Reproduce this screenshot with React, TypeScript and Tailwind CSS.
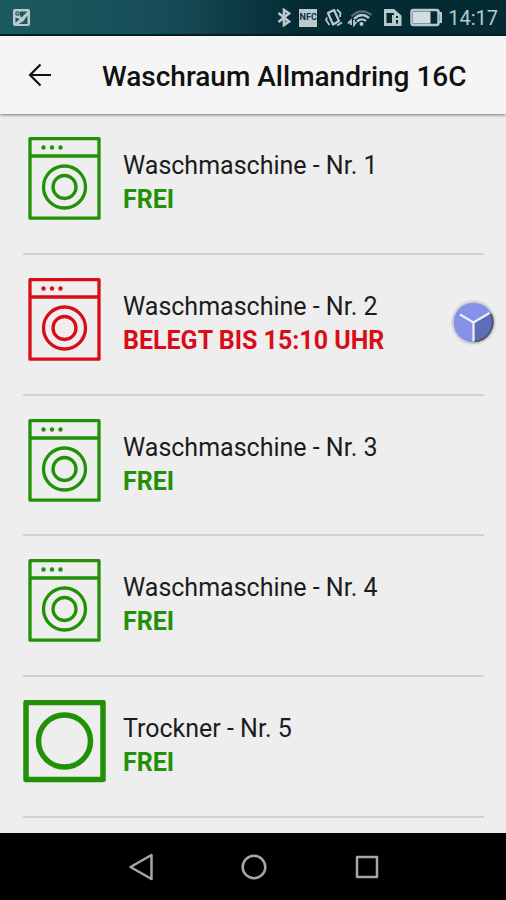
type Machine = {
  id: number;
  kind: "washer" | "dryer";
  name: string;
  status: string;
  free: boolean;
};

const machines: Machine[] = [
  { id: 1, kind: "washer", name: "Waschmaschine - Nr. 1", status: "FREI", free: true },
  { id: 2, kind: "washer", name: "Waschmaschine - Nr. 2", status: "BELEGT BIS 15:10 UHR", free: false },
  { id: 3, kind: "washer", name: "Waschmaschine - Nr. 3", status: "FREI", free: true },
  { id: 4, kind: "washer", name: "Waschmaschine - Nr. 4", status: "FREI", free: true },
  { id: 5, kind: "dryer", name: "Trockner - Nr. 5", status: "FREI", free: true },
];

function WasherIcon() {
  return (
    <svg className="size-[83px] shrink-0" viewBox="0 0 83 83" fill="none" stroke="currentColor" strokeWidth="3.300" strokeLinejoin="round" aria-hidden="true">
      <rect x="7" y="1.700" width="69" height="79.500" />
      <path d="M7 19H76" />
      <circle cx="41.500" cy="50" r="21" />
      <circle cx="41.500" cy="50" r="11.500" />
      <g fill="currentColor" stroke="none">
        <circle cx="20.500" cy="10.500" r="2.200" />
        <circle cx="29" cy="10.500" r="2.200" />
        <circle cx="37.500" cy="10.500" r="2.200" />
      </g>
    </svg>
  );
}

function DryerIcon() {
  return (
    <svg className="size-[83px] shrink-0" viewBox="0 0 83 83" fill="none" stroke="currentColor" strokeWidth="5.500" strokeLinejoin="round" aria-hidden="true">
      <rect x="3" y="2.500" width="77" height="77" />
      <circle cx="41.500" cy="41" r="26" />
    </svg>
  );
}

function StatusBar() {
  return (
    <div className="flex h-9 items-center border-b-2 border-[#061f27] bg-linear-to-r from-[#1b5b60] via-[#164b55] via-35% to-[#042a34] to-60% pt-px pr-2 pl-3 text-[#b9c9cd]">
      <svg className="mr-auto size-[19px]" viewBox="0 0 19 19" fill="none" aria-hidden="true">
        <rect x="1" y="1" width="17" height="17" rx="2" fill="#b9c9cd" />
        <path d="M8 3.500H15.500L9.500 9.500 8 8Z" fill="#1b565c" />
        <path d="M3.500 9.500L7.500 11 3.500 15Z" fill="#1b565c" />
        <path d="M6.500 16L11 13.500 15.500 7.500V16Z" fill="#1b565c" />
        <circle cx="5.500" cy="5.500" r="1.700" stroke="#1b565c" strokeWidth="1.200" />
      </svg>
      <svg className="h-[19px] w-[14px]" viewBox="0 0 14 19" fill="none" stroke="currentColor" strokeWidth="2.600" aria-hidden="true">
        <path d="M1.500 5L12 13.500 7 17V2L12 5.500 1.500 14" />
      </svg>
      <span className="ml-2 flex h-[18px] w-[18px] items-center justify-center bg-[#b9c9cd] text-[9px] font-bold text-[#0b343e]">
        NFC
      </span>
      <svg className="ml-2 h-[19px] w-[18px]" viewBox="0 0 18 19" fill="none" stroke="currentColor" strokeWidth="2.200" strokeLinejoin="round" aria-hidden="true">
        <path d="M3 5L9 2 14 13 8 16.500Z" />
        <path d="M2 9.500L1 12 4.500 17M12 1.500L15.500 5 15 9M12 17.500L17 14.500" strokeWidth="1.800" />
      </svg>
      <svg className="ml-1 h-[19px] w-[26px]" viewBox="0 0 26 19" fill="none" stroke="currentColor" aria-hidden="true">
        <path d="M4.500 8.500Q14 -1 24.500 7" strokeWidth="2" opacity="0.450" />
        <path d="M7 11Q14.500 3.500 22 10" strokeWidth="2.400" />
        <path d="M10 13.500Q14.500 9.500 19 13" strokeWidth="2.400" />
        <circle cx="14.500" cy="16" r="2" fill="currentColor" stroke="none" />
        <path d="M4 17V12.500L1 15.500M7 12V17L9.500 14" strokeWidth="1.800" />
      </svg>
      <svg className="ml-[11px] h-[19px] w-[18px]" viewBox="0 0 18 19" aria-hidden="true">
        <path d="M0 1H10L17.500 7.500V18H0ZM2.500 5V15H8V7H10V5ZM12 8V10H14V8ZM12 12V15.500H14V12Z" fill="currentColor" fillRule="evenodd" />
      </svg>
      <svg className="ml-2 h-[19px] w-[33px]" viewBox="0 0 33 19" aria-hidden="true">
        <rect x="1.500" y="2" width="27" height="15" rx="2" fill="none" stroke="currentColor" strokeWidth="2.500" />
        <path d="M3 3.500H20.500V15.500H3Z" fill="#d5dddf" />
        <path d="M28 5H31V14H28" fill="none" stroke="currentColor" strokeWidth="2" />
      </svg>
      <time className="ml-[5px] text-[20px] leading-6">14:17</time>
    </div>
  );
}

function TopBar() {
  return (
    <header className="relative flex h-[78px] items-center bg-[#f5f5f5] pl-5 shadow-[0_1px_3px_rgba(0,0,0,0.5)]">
      <button type="button" aria-label="Zurück" className="flex size-10 items-center justify-center text-[#111]">
        <svg className="size-6" viewBox="0 0 24 24" fill="none" stroke="currentColor" strokeWidth="2.200" aria-hidden="true">
          <path d="M23 12H2.500M12.500 1.500L2 12 12.500 22.500" />
        </svg>
      </button>
      <h1 className="ml-[42px] pt-1 text-[28px] leading-8 font-medium whitespace-nowrap text-[#111]">Waschraum Allmandring 16C</h1>
    </header>
  );
}

function MachineRow({ machine }: { machine: Machine }) {
  return (
    <li className="mr-[22px] ml-[23px] flex min-h-[140px] flex-1 items-start border-b-2 border-[#d2d2d2] pt-[23px]">
      <span className={machine.free ? "text-[#239107]" : "text-[#d90d17]"}>
        {machine.kind === "washer" ? <WasherIcon /> : <DryerIcon />}
      </span>
      <div className="ml-[17px] pt-3 text-[25px] leading-[34px] whitespace-nowrap">
        <h2 className="text-[#1c1c1c]">{machine.name}</h2>
        <p className={machine.free ? "font-bold text-[#239107]" : "font-bold text-[#d90d17]"}>{machine.status}</p>
      </div>
    </li>
  );
}

function FloatingButton() {
  return (
    <button type="button" aria-label="Schnellzugriff" className="absolute top-[302px] right-3 size-[41px] rounded-full shadow-[0_0_3px_rgba(60,80,70,0.6)]">
      <svg className="size-full" viewBox="0 0 41 41" aria-hidden="true">
        <circle cx="20.500" cy="20.500" r="20" fill="#8592e8" />
        <path d="M20.500 20.500L37.500 10.500A19.500 19.500 0 0 1 20.500 40Z" fill="#5f6db8" />
        <path d="M38 12A19.500 19.500 0 0 1 20.500 39.500" fill="none" stroke="#555965" strokeWidth="2" />
        <path d="M7 12.500L20.500 20.500 36.500 11M20.500 20.500V39.500" fill="none" stroke="#eef0fb" strokeWidth="2.200" />
      </svg>
    </button>
  );
}

function NavigationBar() {
  return (
    <nav className="flex h-[67px] shrink-0 items-center justify-center bg-black pl-[2px] text-[#a6a6a6]">
      <button type="button" aria-label="Zurück" className="flex h-full w-[113px] items-center justify-center">
        <svg className="size-7" viewBox="0 0 28 28" fill="none" stroke="currentColor" strokeWidth="2.500" strokeLinejoin="round" aria-hidden="true">
          <path d="M24.500 2V26L3.500 14Z" />
        </svg>
      </button>
      <button type="button" aria-label="Startseite" className="flex h-full w-[113px] items-center justify-center">
        <svg className="size-7" viewBox="0 0 28 28" fill="none" stroke="currentColor" strokeWidth="2.500" aria-hidden="true">
          <circle cx="14" cy="14" r="11.300" />
        </svg>
      </button>
      <button type="button" aria-label="Übersicht" className="flex h-full w-[113px] items-center justify-center">
        <svg className="size-7" viewBox="0 0 28 28" fill="none" stroke="currentColor" strokeWidth="2.500" strokeLinejoin="round" aria-hidden="true">
          <rect x="4" y="4" width="20" height="20" />
        </svg>
      </button>
    </nav>
  );
}

export default function App() {
  return (
    <div className="relative flex min-h-screen flex-col bg-[#eee] font-[Roboto,sans-serif]">
      <StatusBar />
      <TopBar />
      <main className="flex flex-1 flex-col pb-[15px]">
        <ul className="flex flex-1 flex-col">
          {machines.map((machine) => (
            <MachineRow key={machine.id} machine={machine} />
          ))}
        </ul>
      </main>
      <FloatingButton />
      <NavigationBar />
    </div>
  );
}
